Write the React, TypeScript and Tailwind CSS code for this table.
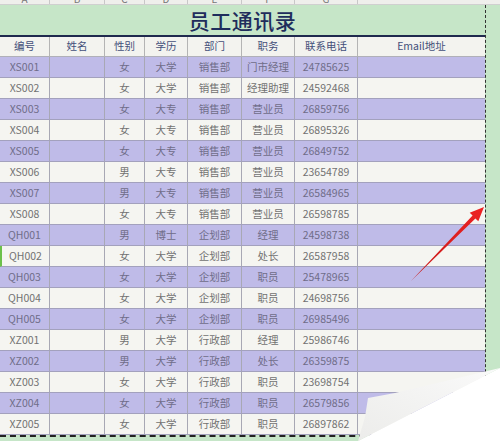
const cols = [50, 55, 40, 43, 54, 53, 63, 127]
const letters = ['A', 'B', 'C', 'D', 'E', 'F', 'G', 'H']
const heads = ['编号', '姓名', '性别', '学历', '部门', '职务', '联系电话', 'Email地址']

const rows: string[][] = [
  ['XS001', '女', '大学', '销售部', '门市经理', '24785625'],
  ['XS002', '女', '大学', '销售部', '经理助理', '24592468'],
  ['XS003', '女', '大专', '销售部', '营业员', '26859756'],
  ['XS004', '女', '大专', '销售部', '营业员', '26895326'],
  ['XS005', '女', '大专', '销售部', '营业员', '26849752'],
  ['XS006', '男', '大专', '销售部', '营业员', '23654789'],
  ['XS007', '男', '大专', '销售部', '营业员', '26584965'],
  ['XS008', '女', '大专', '销售部', '营业员', '26598785'],
  ['QH001', '男', '博士', '企划部', '经理', '24598738'],
  ['QH002', '女', '大学', '企划部', '处长', '26587958'],
  ['QH003', '女', '大学', '企划部', '职员', '25478965'],
  ['QH004', '女', '大学', '企划部', '职员', '24698756'],
  ['QH005', '女', '大学', '企划部', '职员', '26985496'],
  ['XZ001', '男', '大学', '行政部', '经理', '25986746'],
  ['XZ002', '男', '大学', '行政部', '处长', '26359875'],
  ['XZ003', '女', '大学', '行政部', '职员', '23698754'],
  ['XZ004', '女', '大学', '行政部', '职员', '26579856'],
  ['XZ005', '女', '大学', '行政部', '职员', '26897862'],
]

const font = { fontFamily: '"Noto Sans CJK SC", "Noto Sans", sans-serif' }

function Row({ cells, purple, first }: { cells: string[]; purple: boolean; first?: boolean }) {
  const vals = [cells[0], '', cells[1], cells[2], cells[3], cells[4], cells[5], '']
  return (
    <div
      className={`flex h-[21px] border-b border-[#a3a1bd] ${purple ? 'bg-[#bfbbe8]' : 'bg-[#f5f5f1]'} ${
        first ? 'border-l-2 border-l-[#6cc04a]' : ''
      }`}
    >
      {vals.map((v, i) => (
        <div
          key={i}
          style={{ width: first && i === 0 ? cols[i] - 2 : cols[i] }}
          className={`flex items-center justify-center shrink-0 text-[10.5px] leading-none ${
            purple ? 'text-[#6f6d88]' : 'text-[#727272]'
          } ${i < 7 ? 'border-r border-[#a8a8b4]' : ''}`}
        >
          {v}
        </div>
      ))}
    </div>
  )
}

export default function App() {
  return (
    <div className="relative w-[500px] h-[441px] overflow-hidden bg-[#c6e6c8]" style={font}>
      <div className="flex h-[5px] overflow-hidden bg-[#efefec] border-b border-[#d0d0d0]">
        {letters.map((l, i) => (
          <div
            key={l}
            style={{ width: i === 7 ? 400 : cols[i] }}
            className="shrink-0 flex items-end justify-center text-[10px] leading-[10px] text-[#777] border-r border-[#c8c8c8]"
          >
            <span className="block translate-y-[0px]">{l}</span>
          </div>
        ))}
      </div>
      <div className="flex">
        <div className="w-[486px] shrink-0 border-r border-dashed border-[#333]">
          <div className="h-[30px] flex items-center justify-center bg-[#c6e6c8]">
            <span className="text-[21px] leading-none font-medium text-[#1f2d5c] tracking-[0.5px]">员工通讯录</span>
          </div>
          <div className="h-[2px] bg-[#1f2a4e]" />
          <div className="flex h-[20px] bg-[#f3f3ef] border-b border-[#b0b0b8]">
            {heads.map((h, i) => (
              <div
                key={h}
                style={{ width: cols[i] }}
                className={`shrink-0 flex items-center justify-center text-[10.5px] leading-none text-[#44507a] ${
                  i < 7 ? 'border-r border-[#b4b4b4]' : ''
                }`}
              >
                {h}
              </div>
            ))}
          </div>
          {rows.map((r, i) => (
            <Row key={r[0]} cells={r} purple={i % 2 === 0} first={r[0] === 'QH002'} />
          ))}
          <div className="h-[2px] border-t-2 border-dashed border-[#222]" />
        </div>
        <div className="flex-1" />
      </div>

      <svg className="absolute left-0 top-0" width="500" height="441" viewBox="0 0 500 441">
        <defs>
          <linearGradient id="arr" x1="0" y1="1" x2="1" y2="0">
            <stop offset="0" stopColor="#c41a1a" />
            <stop offset="1" stopColor="#ee2222" />
          </linearGradient>
          <linearGradient id="flap" x1="0" y1="1" x2="1" y2="0">
            <stop offset="0" stopColor="#ececea" />
            <stop offset="1" stopColor="#fafafa" />
          </linearGradient>
        </defs>
        <polygon
          points="411,281 472.6,215.6 469.7,212.8 484,207 478.3,221.2 475.4,218.4"
          fill="url(#arr)"
        />
        <polygon points="500,368 500,441 358,441" fill="#ffffff" />
        <polygon points="368,398 395,393 500,368 358,441 365,417" fill="url(#flap)" />
      </svg>
    </div>
  )
}
